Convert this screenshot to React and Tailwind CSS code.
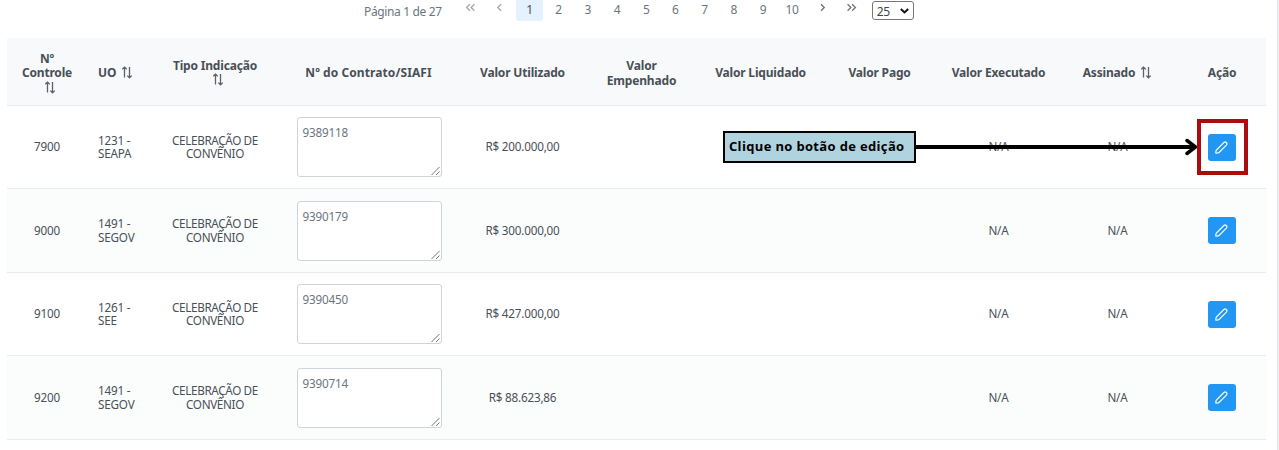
import React from "react";

const COLS =
  "grid grid-cols-[80px_69px_118px_189px_119px_119px_119px_119px_119px_119px_89px] items-center";

const rows = [
  { id: "7900", uo: ["1231 -", "SEAPA"], siafi: "9389118", valor: "R$ 200.000,00", style: "h-[83px] bg-white" },
  { id: "9000", uo: ["1491 -", "SEGOV"], siafi: "9390179", valor: "R$ 300.000,00", style: "h-[84px] bg-[#fbfdfc]" },
  { id: "9100", uo: ["1261 -", "SEE"], siafi: "9390450", valor: "R$ 427.000,00", style: "h-[83px] bg-white" },
  { id: "9200", uo: ["1491 -", "SEGOV"], siafi: "9390714", valor: "R$ 88.623,86", style: "h-[84px] bg-[#fbfdfc]" },
];

function SortIcon({ className = "" }) {
  return (
    <svg className={`inline-block h-[13px] w-3 shrink-0 ${className}`} viewBox="0 0 12 13" fill="none" stroke="#5c6068" strokeWidth="1.3">
      <path d="M3.5 11.5V1M1.3 3.3 3.5 1.1 5.7 3.3M8.5 1v10.8M6.3 9.6l2.2 2.2 2.2-2.2" />
    </svg>
  );
}

function Chevrons({ double, right, color }) {
  return (
    <svg className={`h-[9px] w-[11px] ${right ? "rotate-180" : ""}`} viewBox="0 0 11 9" fill="none" stroke={color} strokeWidth="1.3">
      {double ? <path d="M4.9 1.2 1.6 4.5 4.9 7.8M9.4 1.2 6.1 4.5 9.4 7.8" /> : <path d="M7 1.2 3.7 4.5 7 7.8" />}
    </svg>
  );
}

function Pagination() {
  return (
    <nav className="flex h-[37px] items-start pl-[364px] text-[12px] tracking-[-0.36px] text-[#6c757d]">
      <span className="mt-1 w-[101px] whitespace-nowrap leading-4">Página 1 de 27</span>
      <span className="mt-[3px] flex w-[11px]"><Chevrons double color="#a2a8ae" /></span>
      <span className="ml-[18px] mt-[3px] flex w-[11px]"><Chevrons color="#a2a8ae" /></span>
      <span className="ml-[11px] flex h-[21px] w-[27px] justify-center rounded-b-[3px] bg-[#e3f2fd] pt-[2px] leading-4 text-[#495057]">1</span>
      <div className="ml-[1px] flex pt-[2px] leading-4">
        {[2, 3, 4, 5, 6, 7, 8, 9, 10].map((n) => (
          <span key={n} className="w-[29.2px] text-center">{n}</span>
        ))}
      </div>
      <span className="ml-[10px] mt-[3px] flex w-[11px]"><Chevrons right color="#6c757d" /></span>
      <span className="ml-[18px] mt-[3px] flex w-[11px]"><Chevrons double right color="#6c757d" /></span>
      <div className="ml-[15px] mt-[1px] flex h-[19px] w-[42px] items-center justify-between rounded-[3px] border border-[#767676] pl-1 pr-1 text-[#444]">
        <span className="pt-[2px]">25</span>
        <svg className="h-[6px] w-[9px]" viewBox="0 0 9 6" fill="none" stroke="#111" strokeWidth="2">
          <path d="M.8.9 4.5 4.4 8.2.9" />
        </svg>
      </div>
    </nav>
  );
}

function Header() {
  return (
    <div className={`${COLS} h-[68px] border-b border-[#e9ecef] bg-[#f8f9fa] pt-[2px] text-center text-[12px] font-bold leading-[14px] tracking-[-0.18px] text-[#495057]`}>
      <div className="flex flex-col items-center">
        <span>Nº</span>
        <span>Controle</span>
        <SortIcon className="ml-[5px] mt-[1px]" />
      </div>
      <div className="flex items-center gap-[5px] pl-[11px]">UO <SortIcon className="mb-[1px]" /></div>
      <div className="flex flex-col items-center">
        <span>Tipo Indicação</span>
        <SortIcon className="ml-[5px]" />
      </div>
      <span className="tracking-[0.08px]">Nº do Contrato/SIAFI</span>
      <span>Valor Utilizado</span>
      <span className="leading-[15px]">Valor<br />Empenhado</span>
      <span>Valor Liquidado</span>
      <span>Valor Pago</span>
      <span>Valor Executado</span>
      <div className="flex items-center justify-center gap-[5px]">Assinado <SortIcon className="mb-[1px]" /></div>
      <span className="pl-[1px]">Ação</span>
    </div>
  );
}

function Row({ row }) {
  return (
    <div className={`${COLS} ${row.style} border-b border-[#e9ecef] text-center text-[11.7px] leading-[13.5px] tracking-[-0.2px] text-[#495057]`}>
      <span>{row.id}</span>
      <span className="pl-[11px] text-left">{row.uo[0]}<br />{row.uo[1]}</span>
      <span className="tracking-[-0.35px]">CELEBRAÇÃO DE<br />CONVÊNIO</span>
      <div className="flex justify-center pl-[1px]">
        <div className="flex h-[60px] w-[145px] items-end justify-between rounded-[3px] border border-[#ced4da] bg-white">
          <span className="self-start pl-[5px] pt-2 text-[#6c757d]">{row.siafi}</span>
          <svg className="h-[10px] w-[10px]" viewBox="0 0 10 10" stroke="#777" strokeWidth="1">
            <path d="M.5 9 8.5 1M5 9l3.5-3.5" />
          </svg>
        </div>
      </div>
      <span>{row.valor}</span>
      <span /><span /><span />
      <span>N/A</span>
      <span>N/A</span>
      <div className="flex justify-center">
        <button className="flex h-[27px] w-7 items-center justify-center rounded-[3px] bg-[#2196f3]">
          <svg className="h-[13px] w-[13px]" viewBox="0 0 13 13" fill="none" stroke="#e8f4fe" strokeWidth="1.3" strokeLinejoin="round">
            <path d="M.9 12.1Q.6 9.8 1.7 8.7L8.9 1.5Q10.2.4 11.3 1.5 12.5 2.7 11.4 4.1L4.3 11.3Q3.2 12.4.9 12.1Z" />
          </svg>
        </button>
      </div>
    </div>
  );
}

export default function App() {
  return (
    <div className="relative flex h-[450px] w-[1279px] overflow-hidden bg-white font-['Noto_Sans',sans-serif]">
      <div className="flex w-[1279px] flex-col border-r-2 border-[#e8eaed]">
        <Pagination />
        <div className="ml-[7px] mt-[1px] w-[1259px]">
          <Header />
          {rows.map((r) => <Row key={r.id} row={r} />)}
        </div>
      </div>
      <div className="absolute left-[723px] top-[131px] flex h-8 w-[193px] items-center border-2 border-black bg-[#b0d3e0] pl-1 font-['Open_Sans',sans-serif] text-[13px] font-bold tracking-[0.34px] text-black">
        <span className="whitespace-nowrap">Clique no botão de edição</span>
      </div>
      <svg className="absolute left-[916px] top-[138px] h-[18px] w-[282px]" viewBox="0 0 282 18" fill="none" stroke="#000">
        <path d="M0 9H280" strokeWidth="4" />
        <path d="M271 2.5 279.5 9 271 15.5" strokeWidth="3.5" strokeLinecap="round" />
      </svg>
      <div className="absolute left-[1197px] top-[119px] h-14 w-[51px] border-4 border-[#ad0c0e]" />
    </div>
  );
}
